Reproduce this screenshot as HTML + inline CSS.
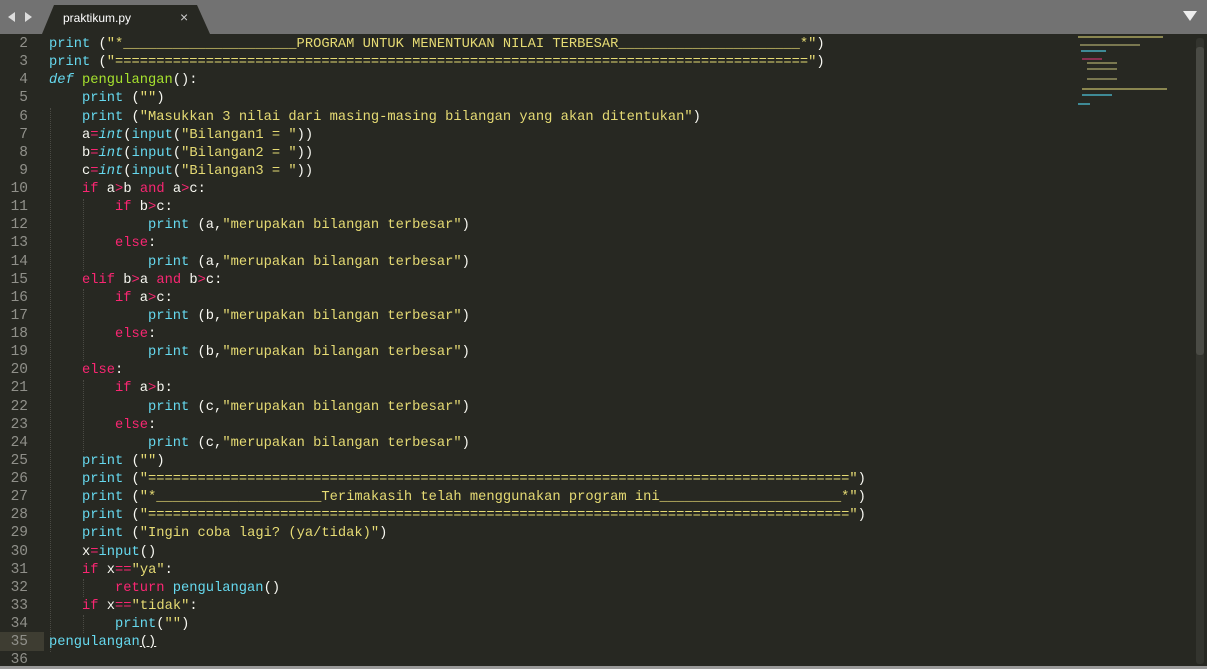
<!DOCTYPE html>
<html><head><meta charset="utf-8"><style>
body{margin:0;width:1207px;height:669px;background:#272822;overflow:hidden;position:relative;font-family:"Liberation Mono",monospace}
#top{position:absolute;left:0;top:0;width:1207px;height:34px;background:#727272}
#tab{position:absolute;left:42px;top:5px;width:168px;height:29px}
#tabt{position:absolute;left:63px;top:11px;font:12px "Liberation Sans",sans-serif;color:#fff}
#tabx{position:absolute;left:180px;top:9px;font:14px "Liberation Sans",sans-serif;color:#ccc}
.ln{position:absolute;left:0;width:28px;text-align:right;color:#90908a;font-size:14.5px;line-height:18.12px}
.cd{position:absolute;left:49px;white-space:pre;color:#f8f8f2;font-size:13.75px;line-height:18.12px}
.p{color:#66d9ef}.s{color:#e6db74}.k{color:#f92672}.i{color:#66d9ef;font-style:italic}.f{color:#a6e22e}
#hl{position:absolute;left:0;top:632px;width:44px;height:19px;background:#3e3d32}
#bot{position:absolute;left:0;top:666px;width:1207px;height:3px;background:#9a9a9a}
#sb{position:absolute;left:1196px;top:38px;width:8px;height:626px;background:#33342e;border-radius:3px}
#th{position:absolute;left:1196px;top:47px;width:8px;height:308px;background:#4a4b45;border-radius:3px}
.g{position:absolute;width:0;border-left:1px dotted #4a4a44}
.m{position:absolute;height:2px}
</style></head><body>
<div id="top"></div>
<svg id="tab" viewBox="0 0 168 29"><path d="M0 29 L12 0 L155 0 L168 29 Z" fill="#272822"/></svg>
<svg style="position:absolute;left:7px;top:11px" width="26" height="12"><path d="M1 6 L8 1 L8 11Z M25 6 L18 1 L18 11Z" fill="#ddd"/></svg>
<div id="tabt">praktikum.py</div>
<div id="tabx">×</div>
<svg style="position:absolute;left:1183px;top:11px" width="14" height="11"><path d="M0 0 L14 0 L7 10Z" fill="#eee"/></svg>
<div id="hl"></div>
<div id="bot"></div>
<div id="sb"></div><div id="th"></div>
<div class="g" style="left:50px;top:108px;height:544px"></div>
<div class="g" style="left:83px;top:199px;height:72px"></div>
<div class="g" style="left:83px;top:289px;height:72px"></div>
<div class="g" style="left:83px;top:380px;height:72px"></div>
<div class="g" style="left:83px;top:579px;height:18px"></div>
<div class="g" style="left:83px;top:615px;height:18px"></div>
<div class="ln" style="top:35px">2<br>3<br>4<br>5<br>6<br>7<br>8<br>9<br>10<br>11<br>12<br>13<br>14<br>15<br>16<br>17<br>18<br>19<br>20<br>21<br>22<br>23<br>24<br>25<br>26<br>27<br>28<br>29<br>30<br>31<br>32<br>33<br>34<br>35<br>36</div>
<div class="cd" style="top:36px"><span class="p">print</span> (<span class="s">"*_____________________PROGRAM UNTUK MENENTUKAN NILAI TERBESAR______________________*"</span>)
<span class="p">print</span> (<span class="s">"===================================================================================="</span>)
<span class="i">def</span> <span class="f">pengulangan</span>():
    <span class="p">print</span> (<span class="s">""</span>)
    <span class="p">print</span> (<span class="s">"Masukkan 3 nilai dari masing-masing bilangan yang akan ditentukan"</span>)
    a<span class="k">=</span><span class="i">int</span>(<span class="p">input</span>(<span class="s">"Bilangan1 = "</span>))
    b<span class="k">=</span><span class="i">int</span>(<span class="p">input</span>(<span class="s">"Bilangan2 = "</span>))
    c<span class="k">=</span><span class="i">int</span>(<span class="p">input</span>(<span class="s">"Bilangan3 = "</span>))
    <span class="k">if</span> a<span class="k">&gt;</span>b <span class="k">and</span> a<span class="k">&gt;</span>c:
        <span class="k">if</span> b<span class="k">&gt;</span>c:
            <span class="p">print</span> (a,<span class="s">"merupakan bilangan terbesar"</span>)
        <span class="k">else</span>:
            <span class="p">print</span> (a,<span class="s">"merupakan bilangan terbesar"</span>)
    <span class="k">elif</span> b<span class="k">&gt;</span>a <span class="k">and</span> b<span class="k">&gt;</span>c:
        <span class="k">if</span> a<span class="k">&gt;</span>c:
            <span class="p">print</span> (b,<span class="s">"merupakan bilangan terbesar"</span>)
        <span class="k">else</span>:
            <span class="p">print</span> (b,<span class="s">"merupakan bilangan terbesar"</span>)
    <span class="k">else</span>:
        <span class="k">if</span> a<span class="k">&gt;</span>b:
            <span class="p">print</span> (c,<span class="s">"merupakan bilangan terbesar"</span>)
        <span class="k">else</span>:
            <span class="p">print</span> (c,<span class="s">"merupakan bilangan terbesar"</span>)
    <span class="p">print</span> (<span class="s">""</span>)
    <span class="p">print</span> (<span class="s">"====================================================================================="</span>)
    <span class="p">print</span> (<span class="s">"*____________________Terimakasih telah menggunakan program ini______________________*"</span>)
    <span class="p">print</span> (<span class="s">"====================================================================================="</span>)
    <span class="p">print</span> (<span class="s">"Ingin coba lagi? (ya/tidak)"</span>)
    x<span class="k">=</span><span class="p">input</span>()
    <span class="k">if</span> x<span class="k">==</span><span class="s">"ya"</span>:
        <span class="k">return</span> <span class="p">pengulangan</span>()
    <span class="k">if</span> x<span class="k">==</span><span class="s">"tidak"</span>:
        <span class="p">print</span>(<span class="s">""</span>)
<span class="p">pengulangan</span><span style="text-decoration:underline">()</span>
</div>
<div class="m" style="left:1078px;top:36px;width:85px;background:#8a8650"></div>
<div class="m" style="left:1080px;top:44px;width:60px;background:#7a7850"></div>
<div class="m" style="left:1081px;top:50px;width:25px;background:#3f8a96"></div>
<div class="m" style="left:1082px;top:58px;width:20px;background:#8a3050"></div>
<div class="m" style="left:1087px;top:62px;width:30px;background:#7a7850"></div>
<div class="m" style="left:1087px;top:68px;width:30px;background:#7a7850"></div>
<div class="m" style="left:1087px;top:78px;width:30px;background:#7a7850"></div>
<div class="m" style="left:1082px;top:88px;width:85px;background:#8a8650"></div>
<div class="m" style="left:1082px;top:94px;width:30px;background:#3f8a96"></div>
<div class="m" style="left:1078px;top:103px;width:12px;background:#3f8a96"></div>
</body></html>
